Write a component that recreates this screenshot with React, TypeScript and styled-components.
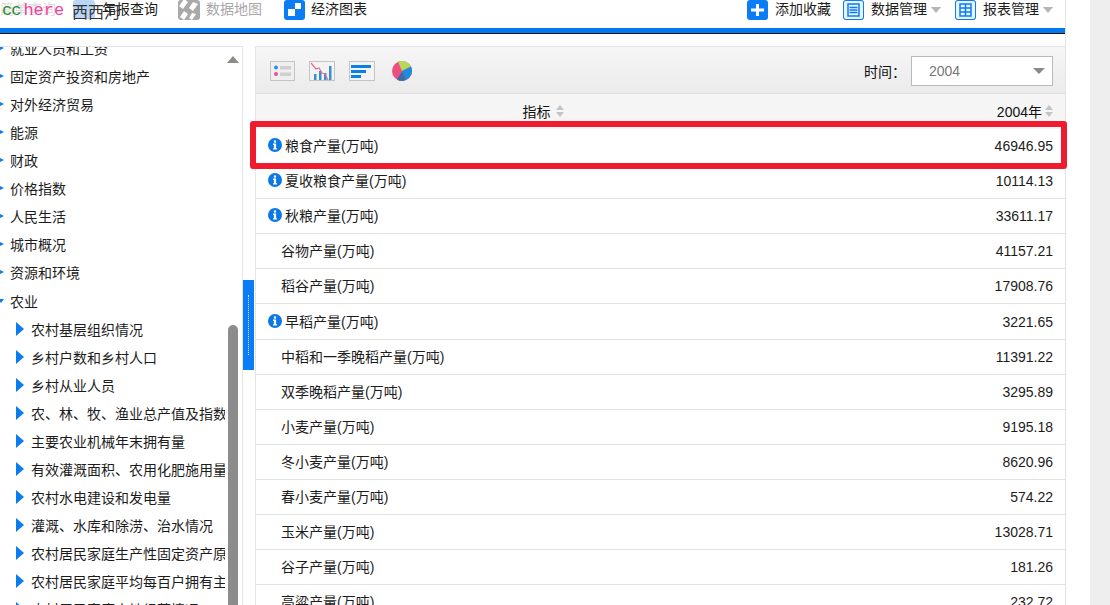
import React from "react";
import styled, { createGlobalStyle } from "styled-components";

const GlobalStyle = createGlobalStyle`
  html, body {
    margin: 0;
    height: 100%;
    overflow: hidden;
    background: #fff;
    font-family: "Liberation Sans", "Noto Sans CJK SC", sans-serif;
    font-size: 14px;
    color: #111;
  }
`;

const Root = styled.div`
  position: relative;
  display: flex;
  width: 1110px;
  height: 605px;
  overflow: hidden;
`;

const Frame = styled.div`
  width: 1065px;
  height: 605px;
  flex-shrink: 0;
  display: flex;
  flex-direction: column;
  border-right: 1px solid #e4e4e4;
`;

const Gutter = styled.div`
  width: 24px;
  flex-shrink: 0;
`;

const Rail = styled.div`
  flex: 1;
  background: #eeeeee;
`;

const TopBar = styled.div`
  height: 28px;
  flex-shrink: 0;
  display: flex;
  align-items: flex-start;
  justify-content: space-between;
  border-bottom: 5px solid #0078f0;
  box-shadow: 0 1px 0 #111;
  margin-bottom: 13px;
`;

const NavGroup = styled.div`
  display: flex;
  align-items: center;
  height: 19px;
`;

const NavItem = styled.div<{ $muted?: boolean; $gap: number; $width: number }>`
  display: flex;
  align-items: center;
  gap: ${(p) => p.$gap}px;
  width: ${(p) => p.$width}px;
  flex-shrink: 0;
  line-height: 19px;
  white-space: nowrap;
  color: ${(p) => (p.$muted ? "#aaa6aa" : "#1c1c1c")};
`;

const RightNav = styled(NavGroup)`
  padding-right: 12px;
`;

const Faint = styled.span`
  color: #dcdcdc;
  margin-right: 10px;
`;

const PaleIcon = styled.span`
  width: 22px;
  height: 19px;
  border-radius: 3px;
  background: #b9d6f7;
  flex-shrink: 0;
`;

const Caret = styled.span`
  width: 0;
  height: 0;
  border-left: 5px solid transparent;
  border-right: 5px solid transparent;
  border-top: 6px solid #b5b5b5;
  margin-left: -3px;
`;

const Overlay = styled.div`
  position: absolute;
  left: 2px;
  top: 1px;
  height: 19px;
  line-height: 19px;
  white-space: nowrap;
`;

const Green = styled.span`
  font-family: "Liberation Mono", monospace;
  font-size: 17px;
  letter-spacing: -1px;
  color: #2a8a2a;
`;

const Pink = styled.span`
  font-family: "Liberation Mono", monospace;
  font-size: 17px;
  color: #f43f9c;
  margin-left: 3px;
`;

const Brand = styled.span`
  position: absolute;
  left: 70px;
  top: 2px;
  font-size: 16px;
  color: #333;
`;

const Main = styled.div`
  flex: 1;
  min-height: 0;
  display: flex;
`;

const Sidebar = styled.div`
  position: relative;
  width: 242px;
  flex-shrink: 0;
  border-top: 1px solid #e4e4e4;
  border-right: 1px solid #e4e4e4;
  overflow: hidden;
`;

const Tree = styled.ul`
  list-style: none;
  margin: -13px 0 0;
  padding: 0;
  width: 225px;
`;

const TreeRow = styled.li<{ $child?: boolean }>`
  display: flex;
  align-items: center;
  height: 28px;
  white-space: nowrap;
  overflow: hidden;
  padding-left: ${(p) => (p.$child ? 16 : 0)}px;
  gap: ${(p) => (p.$child ? 7 : 6)}px;
  color: #1c1c1c;
`;

const OpenRow = styled(TreeRow)`
  margin-top: 1px;
`;

const TreeArrow = styled.span<{ $big?: boolean }>`
  flex-shrink: 0;
  width: 0;
  height: 0;
  border-top: ${(p) => (p.$big ? 7 : 2)}px solid transparent;
  border-bottom: ${(p) => (p.$big ? 7 : 2)}px solid transparent;
  border-left: ${(p) => (p.$big ? 8 : 4)}px solid #0a7cf0;
`;

const OpenArrow = styled.span`
  flex-shrink: 0;
  width: 0;
  height: 0;
  border-left: 3px solid transparent;
  border-right: 3px solid transparent;
  border-top: 4px solid #0a7cf0;
  margin-left: -2px;
`;

const ScrollUp = styled.span`
  position: absolute;
  left: 227px;
  top: 9px;
  width: 0;
  height: 0;
  border-left: 6px solid transparent;
  border-right: 6px solid transparent;
  border-bottom: 7px solid #8e8a84;
`;

const ScrollThumb = styled.span`
  position: absolute;
  left: 228px;
  top: 278px;
  width: 10px;
  height: 300px;
  background: #8c8c8c;
  border-radius: 5px 5px 0 0;
`;

const Splitter = styled.div`
  width: 12px;
  flex-shrink: 0;
  padding-top: 234px;
`;

const SplitHandle = styled.div`
  width: 11px;
  height: 90px;
  background: #0a7cf5;
  display: flex;
  justify-content: center;
  padding-top: 15px;
  box-sizing: border-box;
`;

const HandleDots = styled.span`
  width: 0;
  height: 60px;
  border-left: 1px dotted #d6e8ff;
`;

const Panel = styled.div`
  flex: 1;
  min-width: 0;
  border-top: 1px solid #e4e4e4;
  border-left: 1px solid #e4e4e4;
  overflow: hidden;
`;

const Toolbar = styled.div`
  height: 44px;
  display: flex;
  align-items: center;
  justify-content: space-between;
  padding: 2px 12px 0 14px;
  background: linear-gradient(#f6f6f6, #ebebeb);
  border-bottom: 1px solid #e0e0e0;
`;

const ToolIcons = styled.div`
  display: flex;
  align-items: center;
  gap: 14px;
`;

const PieWrap = styled.span`
  display: flex;
  margin-left: 3px;
`;

const TimeField = styled.div`
  display: flex;
  align-items: center;
  gap: 5px;
`;

const Select = styled.div`
  width: 142px;
  height: 30px;
  box-sizing: border-box;
  border: 1px solid #b9b9b9;
  background: #fff;
  display: flex;
  align-items: center;
  justify-content: space-between;
  padding: 0 7px 0 17px;
  color: #777;
`;

const SelectCaret = styled.span`
  width: 0;
  height: 0;
  border-left: 6px solid transparent;
  border-right: 6px solid transparent;
  border-top: 6px solid #8a8a8a;
`;

const HeaderRow = styled.div`
  display: flex;
  align-items: center;
  height: 35px;
  box-sizing: border-box;
  padding: 0 12px 1px 0;
  background: #f5f5f5;
`;

const NameHead = styled.div`
  width: 574px;
  display: flex;
  justify-content: center;
  align-items: center;
  gap: 5px;
`;

const ValueHead = styled.div`
  flex: 1;
  display: flex;
  justify-content: flex-end;
  align-items: center;
  gap: 3px;
`;

const SortMark = styled.span`
  display: flex;
  flex-direction: column;
  gap: 2px;
`;

const SortUp = styled.span`
  width: 0;
  height: 0;
  border-left: 4px solid transparent;
  border-right: 4px solid transparent;
  border-bottom: 5px solid #c4c4c4;
`;

const SortDown = styled(SortUp)`
  border-bottom: none;
  border-top: 5px solid #c4c4c4;
`;

const DataRow = styled.div<{ $info: boolean }>`
  display: flex;
  align-items: center;
  justify-content: space-between;
  height: 35.1px;
  box-sizing: border-box;
  border-bottom: 1px solid #e2e2e2;
  padding: 0 12px 0 ${(p) => (p.$info ? 12 : 25)}px;
  white-space: nowrap;
  color: #1c1c1c;
`;

const RowName = styled.div`
  display: flex;
  align-items: center;
  gap: 3px;
  margin-bottom: 2px;
`;

const Highlight = styled.div`
  position: absolute;
  left: 250px;
  top: 121px;
  width: 805px;
  height: 36px;
  border: 6px solid #ee1c2e;
  border-radius: 3px;
`;

const InfoIcon = () => (
  <svg width="14" height="14" viewBox="0 0 14 14">
    <circle cx="7" cy="7" r="7" fill="#0a78e6" />
    <rect x="5.9" y="2.4" width="2.2" height="2.2" fill="#fff" />
    <path d="M5 5.6h3.1v4.6H9v1.3H5v-1.3h.9V6.9H5z" fill="#fff" />
  </svg>
);

const BlueSquare = ({ children }: { children: React.ReactNode }) => (
  <svg width="21" height="20" viewBox="0 0 21 20">
    <rect width="21" height="20" rx="3" fill="#0a7cf5" />
    {children}
  </svg>
);

const MapIcon = () => (
  <svg width="22" height="20" viewBox="0 0 22 20">
    <rect width="22" height="20" rx="3" fill="#a9a9a9" />
    <path d="M6 -1 1 6l4 3 5-7zM15 2l-4 6 4 3 5-7zM6 11l-4 6 4 3 4-6zM14 13l-3 5 3 2 4-6z" fill="#fff" />
  </svg>
);

const ListIcon = () => (
  <svg width="25" height="20" viewBox="0 0 25 20">
    <rect x=".5" y=".5" width="24" height="19" fill="#efefef" stroke="#c4c4c4" />
    <circle cx="6" cy="6.5" r="2" fill="#2d8cf0" />
    <circle cx="6" cy="13" r="2" fill="#ee4f94" />
    <rect x="10" y="5" width="11" height="3.5" fill="#cfcfcf" />
    <rect x="10" y="11.5" width="11" height="3.5" fill="#cfcfcf" />
  </svg>
);

const BarLineIcon = () => (
  <svg width="26" height="20" viewBox="0 0 26 20">
    <rect x=".5" y=".5" width="25" height="19" fill="#f3f3f3" stroke="#c4c4c4" />
    <path d="M5 19v-6h2.5v6zM10 19v-9h2.5v9zM15 19v-7h2.5v7zM20 19V5h2.5v14z" fill="#3a8fd0" />
    <path d="M2 2l5 6 3-1 3 5 3 1 3 6" fill="none" stroke="#ec6d8a" strokeWidth="1.2" />
  </svg>
);

const RowsIcon = () => (
  <svg width="26" height="20" viewBox="0 0 26 20">
    <rect x=".5" y=".5" width="25" height="19" fill="#f3f3f3" stroke="#c4c4c4" />
    <rect x="2" y="4" width="20" height="3" fill="#0a7fe8" />
    <rect x="2" y="9" width="15" height="3" fill="#0a7fe8" />
    <rect x="2" y="14" width="10" height="3" fill="#0a7fe8" />
  </svg>
);

const PieIcon = () => (
  <svg width="20" height="20" viewBox="0 0 20 20">
    <circle cx="10" cy="10" r="10" fill="#ee4f80" />
    <path d="M10 10 6 .8A10 10 0 0 1 19 5.5z" fill="#b6d95a" />
    <path d="M10 10 19 5.5A10 10 0 0 1 14 19z" fill="#1f8ae0" />
    <path d="M10 10 14 19A10 10 0 0 1 5 18.7z" fill="#3a6ea8" />
  </svg>
);

const topItems = ["固定资产投资和房地产", "对外经济贸易", "能源", "财政", "价格指数", "人民生活", "城市概况", "资源和环境"];

const farmItems = [
  "农村基层组织情况",
  "乡村户数和乡村人口",
  "乡村从业人员",
  "农、林、牧、渔业总产值及指数",
  "主要农业机械年末拥有量",
  "有效灌溉面积、农用化肥施用量",
  "农村水电建设和发电量",
  "灌溉、水库和除涝、治水情况",
  "农村居民家庭生产性固定资产原值",
  "农村居民家庭平均每百户拥有主要",
  "农村居民家庭土地经营情况",
];

const rows = [
  { name: "粮食产量(万吨)", value: "46946.95", info: true },
  { name: "夏收粮食产量(万吨)", value: "10114.13", info: true },
  { name: "秋粮产量(万吨)", value: "33611.17", info: true },
  { name: "谷物产量(万吨)", value: "41157.21", info: false },
  { name: "稻谷产量(万吨)", value: "17908.76", info: false },
  { name: "早稻产量(万吨)", value: "3221.65", info: true },
  { name: "中稻和一季晚稻产量(万吨)", value: "11391.22", info: false },
  { name: "双季晚稻产量(万吨)", value: "3295.89", info: false },
  { name: "小麦产量(万吨)", value: "9195.18", info: false },
  { name: "冬小麦产量(万吨)", value: "8620.96", info: false },
  { name: "春小麦产量(万吨)", value: "574.22", info: false },
  { name: "玉米产量(万吨)", value: "13028.71", info: false },
  { name: "谷子产量(万吨)", value: "181.26", info: false },
  { name: "高粱产量(万吨)", value: "232.72", info: false },
];

const Sort = () => (
  <SortMark>
    <SortUp />
    <SortDown />
  </SortMark>
);

export default function App() {
  return (
    <Root>
      <GlobalStyle />
      <Frame>
        <TopBar>
          <NavGroup>
            <NavItem $gap={7} $width={178}>
              <Faint>简单查询</Faint>
              <PaleIcon />
              <span>年报查询</span>
            </NavItem>
            <NavItem $muted $gap={6} $width={106}>
              <MapIcon />
              数据地图
            </NavItem>
            <NavItem $gap={6} $width={90}>
              <BlueSquare>
                <rect x="11" y="3" width="6" height="6" fill="#fff" />
                <rect x="4" y="9" width="7" height="7" fill="#fff" />
              </BlueSquare>
              经济图表
            </NavItem>
          </NavGroup>
          <RightNav>
            <NavItem $gap={7} $width={96}>
              <BlueSquare>
                <path d="M9 4h3v4.500h5v3h-5V16H9v-4.500H4v-3h5z" fill="#fff" />
              </BlueSquare>
              添加收藏
            </NavItem>
            <NavItem $gap={7} $width={112}>
              <BlueSquare>
                <rect x="1" y="1" width="19" height="18" rx="2" fill="#e9f3ff" />
                <path d="M5 4h11v12H5zM6.500 7.500h8M6.500 10h8M6.500 12.500h8" fill="none" stroke="#0a7cf5" strokeWidth="1.500" />
              </BlueSquare>
              数据管理
              <Caret />
            </NavItem>
            <NavItem $gap={7} $width={98}>
              <BlueSquare>
                <rect x="1" y="1" width="19" height="18" rx="2" fill="#e9f3ff" />
                <path d="M5 4h11v12H5zM5 8h11M5 12h11M10.500 4v12" fill="none" stroke="#0a7cf5" strokeWidth="1.500" />
              </BlueSquare>
              报表管理
              <Caret />
            </NavItem>
          </RightNav>
        </TopBar>
        <Main>
          <Sidebar>
            <Tree>
              <TreeRow>
                <TreeArrow />
                就业人员和工资
              </TreeRow>
              {topItems.map((t) => (
                <TreeRow key={t}>
                  <TreeArrow />
                  {t}
                </TreeRow>
              ))}
              <OpenRow>
                <OpenArrow />
                农业
              </OpenRow>
              {farmItems.map((t) => (
                <TreeRow $child key={t}>
                  <TreeArrow $big />
                  {t}
                </TreeRow>
              ))}
            </Tree>
            <ScrollUp />
            <ScrollThumb />
          </Sidebar>
          <Splitter>
            <SplitHandle>
              <HandleDots />
            </SplitHandle>
          </Splitter>
          <Panel>
            <Toolbar>
              <ToolIcons>
                <ListIcon />
                <BarLineIcon />
                <RowsIcon />
                <PieWrap>
                  <PieIcon />
                </PieWrap>
              </ToolIcons>
              <TimeField>
                时间：
                <Select>
                  2004
                  <SelectCaret />
                </Select>
              </TimeField>
            </Toolbar>
            <HeaderRow>
              <NameHead>
                指标
                <Sort />
              </NameHead>
              <ValueHead>
                2004年
                <Sort />
              </ValueHead>
            </HeaderRow>
            {rows.map((r) => (
              <DataRow $info={r.info} key={r.name}>
                <RowName>
                  {r.info && <InfoIcon />}
                  {r.name}
                </RowName>
                {r.value}
              </DataRow>
            ))}
          </Panel>
        </Main>
      </Frame>
      <Gutter />
      <Rail />
      <Overlay>
        <Green>cc</Green>
        <Pink>here</Pink>
        <Brand>西西河</Brand>
      </Overlay>
      <Highlight />
    </Root>
  );
}
